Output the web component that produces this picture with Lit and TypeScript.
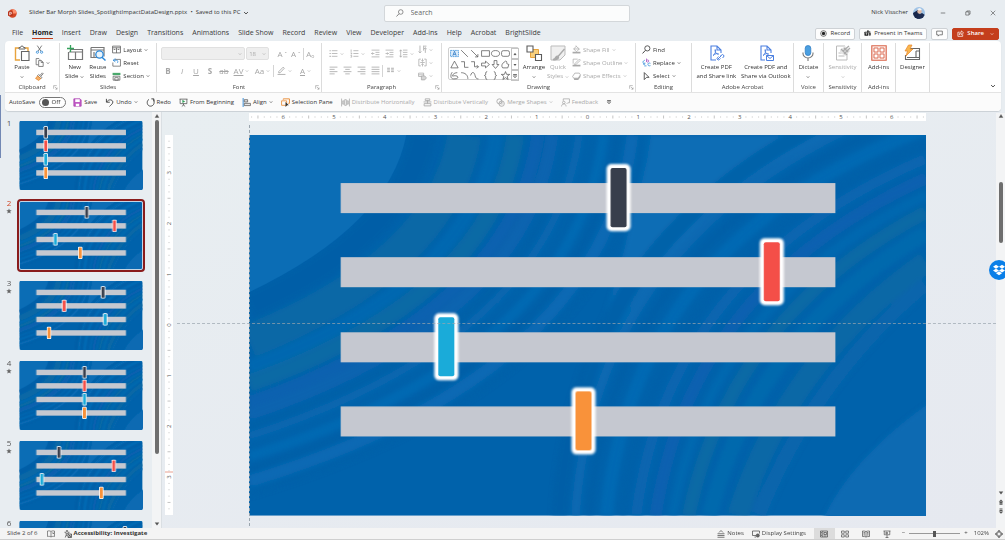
import { LitElement, html, svg, css, nothing } from "lit";
import { customElement, property } from "lit/decorators.js";
import { classMap } from "lit/directives/class-map.js";

const ICONS: Record<string, unknown> = {
  chev: svg`<path d="M3 5.5l5 5 5-5" fill="none" stroke="currentColor" stroke-width="2.400"/>`,
  cut: svg`<path d="M4 1l6.5 10M12 1L5.5 11" fill="none" stroke="#555" stroke-width="1.3"/><circle cx="4.3" cy="12.8" r="2" fill="none" stroke="#2b88d8" stroke-width="1.4"/><circle cx="11.7" cy="12.8" r="2" fill="none" stroke="#2b88d8" stroke-width="1.4"/>`,
  copy: svg`<path d="M6 12H2V1h5l2 2M6.500 4.500h5l3 3V15h-8zM11 5v3h3.500" fill="none" stroke="#5c5c5c" stroke-width="1.300"/>`,
  brush: svg`<path d="M9 6l4-4.500 1.500 1.500L10.500 7.500M6.500 4.500l6 5.500-2 2-6-5.500z" fill="#fff" stroke="#555" stroke-width="1.300"/><path d="M4.500 7L1 11.500 6.500 15l4-3.500z" fill="#f6b26b" stroke="#e07b1c" stroke-width="1.200"/>`,
  paste: svg`<path d="M5 3H1.500v12H6M11 3h3v3" fill="none" stroke="#e8a33d" stroke-width="1.400"/><path d="M5 4V2.500h1.500a1.500 1.500 0 013 0H11V4z" fill="#fff" stroke="#666" stroke-width="1"/><path d="M7.500 6.500h7.500v9H7.500z" fill="#fff" stroke="#666" stroke-width="1.100"/>`,
  newSlide: svg`<path d="M3 4.500h12.500v10H1.500V7" fill="#fff" stroke="#777" stroke-width="1.200"/><path d="M2 7h13M8.500 7v7" stroke="#777" stroke-width="1.200"/><path d="M3.500 0v7M0 3.500h7" stroke="#35a15c" stroke-width="1.300"/>`,
  reuse: svg`<path d="M1 2.500h13v9M1 2.500v10h6M1 5h13M4 7v5" fill="none" stroke="#777" stroke-width="1.200"/><circle cx="9.500" cy="9.500" r="3.700" fill="#e9f4fc" stroke="#2b88d8" stroke-width="1.300"/><path d="M12 12.200l3.500 3.300" stroke="#2b88d8" stroke-width="1.500"/>`,
  layout: svg`<path d="M1 2h14v12H1zM1 5h14M8 5v9M3 8h3M10 8h3" fill="none" stroke="#5c5c5c" stroke-width="1.400"/>`,
  reset: svg`<path d="M5 2.500h10v12H1.500V8" fill="none" stroke="#5c5c5c" stroke-width="1.300"/><path d="M6 1L2 4l4 3M2 4h6c3 0 3 4 1 5" fill="none" stroke="#2b88d8" stroke-width="1.400"/>`,
  section: svg`<path d="M1 1.500h14v4H1z" fill="#4aa96c"/><path d="M2 7.500h12v7H2zM5 10h6v4.500H5z" fill="none" stroke="#5c5c5c" stroke-width="1.300"/>`,
  pen: svg`<path d="M3 10l8-8 2 2-7.500 8H3zM1 15h14" fill="none" stroke="currentColor" stroke-width="1.500"/>`,
  bullets: svg`<path d="M5 3h10M5 8h10M5 13h10" stroke="currentColor" stroke-width="1.300"/><path d="M1 3h2M1 8h2M1 13h2" stroke="currentColor" stroke-width="2"/>`,
  numbers: svg`<path d="M6 3h9M6 8h9M6 13h9M2 1v4M1 7h2v2H1.500M1 11.500h2v3H1" fill="none" stroke="currentColor" stroke-width="1.300"/>`,
  outdent: svg`<path d="M1 2h14M8 6h7M8 10h7M1 14h14M6 8H1M3 6L1 8l2 2" fill="none" stroke="currentColor" stroke-width="1.300"/>`,
  indent: svg`<path d="M1 2h14M8 6h7M8 10h7M1 14h14M1 8h5M4 6l2 2-2 2" fill="none" stroke="currentColor" stroke-width="1.300"/>`,
  spacing: svg`<path d="M7 2h8M7 6h8M7 10h8M7 14h8M3 1.500v13M1 4l2-2.500L5 4M1 12l2 2.500L5 12" fill="none" stroke="currentColor" stroke-width="1.300"/>`,
  left: svg`<path d="M1 2h14M1 6h9M1 10h14M1 14h9" stroke="currentColor" stroke-width="1.400"/>`,
  center: svg`<path d="M1 2h14M4 6h8M1 10h14M4 14h8" stroke="currentColor" stroke-width="1.400"/>`,
  right: svg`<path d="M1 2h14M6 6h9M1 10h14M6 14h9" stroke="currentColor" stroke-width="1.400"/>`,
  justify: svg`<path d="M1 2h14M1 6h14M1 10h14M1 14h14" stroke="currentColor" stroke-width="1.400"/>`,
  columns: svg`<path d="M2 4h5M2 7h5M2 10h5M9 4h5M9 7h5M9 10h5" stroke="currentColor" stroke-width="1.600"/>`,
  textDir: svg`<path d="M3.500 1v13M1 11.500L3.500 14 6 11.500M10 1v9M13 14V5M11 2h4M10.500 7l2.500-2 2.500 2" fill="none" stroke="currentColor" stroke-width="1.400"/>`,
  alignText: svg`<path d="M5 2H1.500v12H5M11 2h3.500v12H11M8 1v5M6 4l2 2 2-2M8 15v-5M6 12l2-2 2 2M4 8h8" fill="none" stroke="currentColor" stroke-width="1.300"/>`,
  smart: svg`<path d="M1 2h9v6H1zM1 5h9" fill="none" stroke="currentColor" stroke-width="1.300"/><path d="M6 7h6l3 3.500-3 3.500H6z" fill="#d5d5d5" stroke="currentColor" stroke-width="1.300"/>`,
  arrange: svg`<path d="M4.500 4.500h8v8h-8z" fill="#f8cf7c" stroke="#e8a33d"/><path d="M1 1h6v6H1zM9.500 9.500h6v6h-6z" fill="#fff" stroke="#5c5c5c" stroke-width="1.100"/>`,
  quick: svg`<path d="M1 1h14v9l-5 5H1z" fill="#f0f0f0" stroke="#bbb"/><path d="M14.500 4L8 11.500M6 12c2-2 3 0 2 1.500-1 1-3 1.500-5 1 2 0 2-1.500 3-2.500z" fill="#aaa" stroke="#aaa" stroke-width="1.400"/>`,
  fill: svg`<path d="M7 2l6 5-5 5-5-5 4-4V1M3 7h10" fill="none" stroke="currentColor" stroke-width="1.300"/><path d="M1 13.500h14" stroke="currentColor" stroke-width="3"/>`,
  outline: svg`<path d="M10 2H2v8M5 10l8-8 2 2-7.500 7L4.500 11.500z" fill="none" stroke="currentColor" stroke-width="1.300"/><path d="M1 13.500h14" stroke="currentColor" stroke-width="3"/>`,
  effects: svg`<path d="M5 2h8l2 3-4 6H3L1 8z" fill="none" stroke="currentColor" stroke-width="1.400"/><path d="M3 11h8l4-6v4l-4 5H4z" fill="currentColor"/>`,
  find: svg`<circle cx="9.500" cy="6" r="4.600" fill="none" stroke="currentColor" stroke-width="1.400"/><path d="M6 9.500L1 15" stroke="currentColor" stroke-width="1.600"/>`,
  replace: svg`<path d="M8 1v6M8 4.500c1-1.500 4-1.500 4 .8S9 8 8 6.300" fill="none" stroke="#a64fc0" stroke-width="1.400"/><path d="M15 9.500c-3-1.500-4.500 0-4.500 2s2 3 4.500 2M5 4C1 5 1 9 4 11M2 11h3V8M4 14h4" fill="none" stroke="#2b88d8" stroke-width="1.400"/>`,
  select: svg`<path d="M4 1l8.500 8.500H8L4 13.500z" fill="none" stroke="currentColor" stroke-width="1.400"/>`,
  pdfLink: svg`<path d="M8 15H3V1h6l4 4v3M9 1v4h4" fill="none" stroke="#4a7fe0" stroke-width="1.100"/><path d="M5 10.500c2-1 3-4 2.500-5.500s-1 1 .5 3 3 1.500 2.500.8S7 8.500 5 10.500z" fill="none" stroke="#4a7fe0" stroke-width=".9"/><path d="M9.500 14.500l4-4m-3 1l-1 1a1.400 1.400 0 002 2l1-1m0-2.500l1-1a1.400 1.400 0 012 2l-1 1" fill="none" stroke="#4a7fe0"/>`,
  pdfMail: svg`<path d="M7 15H3V1h6l4 4v3M9 1v4h4" fill="none" stroke="#4a7fe0" stroke-width="1.100"/><path d="M5 10.500c2-1 3-4 2.500-5.500s-1 1 .5 3 3 1.500 2.500.8S7 8.500 5 10.500z" fill="none" stroke="#4a7fe0" stroke-width=".9"/><path d="M8.500 10.500h7v5h-7zl3.500 3 3.500-3" fill="#fff" stroke="#4a7fe0"/>`,
  mic: svg`<rect x="5.200" y=".5" width="5.600" height="10" rx="2.800" fill="#4a9fe0" stroke="#2b78c0" stroke-width=".7"/><path d="M3 7.500v1a5 4.500 0 0010 0v-1M8 13v3" fill="none" stroke="#777" stroke-width="1.100"/>`,
  sensitivity: svg`<path d="M10 1H1.500v14H12V8M3.500 8h3M3.500 11h6" fill="none" stroke="#bbb"/><path d="M5 5l5-4 5 5-4 5-6-3z" fill="#e4e4e4"/><path d="M8 6l6-5M6 4l6 6M9 3l4 4M9 9l6-6" stroke="#aaa" stroke-width="1.300"/>`,
  addins: svg`<path d="M.8.8h14.400v14.400H.8z" fill="#fbeae5" stroke="#d9644a" stroke-width="1.100"/><path d="M3 3h4v4H3zM9 3h4v4H9zM3 9h4v4H3zM9 9h4v4H9z" fill="#fff" stroke="#d9644a" stroke-width=".9"/>`,
  designer: svg`<path d="M6 3.500h9.500v11H1.500V10M3 12.500h12.500M12 6h3.500M12 6v6.500" fill="none" stroke="#666" stroke-width="1.100"/><path d="M4.500 0H8L6 4h3L2 11l1.500-5H1z" fill="#f9b64e" stroke="#e8872d" stroke-width=".7"/>`,
  save: svg`<path d="M1.500 1.500h11l2 2v11h-13z" fill="#c05bc4" stroke="#a83bae" stroke-width="1.300"/><path d="M4 2h8v5H4zM5 10h6v4.500H5z" fill="#fff"/>`,
  undo: svg`<path d="M2.500 1.500v6h6M3 7c3-5 10-5 11 0 0 3-3 5-6 8" fill="none" stroke="currentColor" stroke-width="1.500"/>`,
  redo: svg`<path d="M9.500 1.500h4.500v4.500M5 2.500C0 6 2 14.500 8 14.500c6.500 0 8-8 5-12" fill="none" stroke="currentColor" stroke-width="1.500"/>`,
  begin: svg`<path d="M1 2h14M2 2v8h12V2M8 10v3M5 15l3-2.500 3 2.500" fill="none" stroke="#555" stroke-width="1.400"/><path d="M6 3l5 3.300L6 9z" fill="#35a15c"/>`,
  align: svg`<path d="M2 0v16" stroke="#2b88d8" stroke-width="1.600"/><path d="M4 3h6v4H4zM4 9.500h11v4H4z" fill="#e4e4e4" stroke="#555" stroke-width="1.300"/>`,
  pane: svg`<path d="M4 3V1.500h11v8h-2" fill="none" stroke="#e8872d" stroke-width="1.600"/><path d="M1 5h9v8H1z" fill="none" stroke="#e8872d" stroke-width="1.400"/><path d="M8 7l6 6h-3l-3 3z" fill="#333"/>`,
  distH: svg`<path d="M1 1v14M15 1v14M3 5h2v6H3zM6.500 3h3v10h-3zM11 5h2v6h-2z" fill="none" stroke="currentColor" stroke-width="1.400"/>`,
  distV: svg`<path d="M1 7h14M4 1.500h8v3H4zM2 10h12v4H2zM8 4v6" fill="none" stroke="currentColor" stroke-width="1.500"/>`,
  merge: svg`<circle cx="6" cy="6" r="4.500" fill="none" stroke="currentColor" stroke-width="1.500"/><circle cx="10" cy="10" r="4.800" fill="none" stroke="currentColor" stroke-width="1.500"/><path d="M6 9l4-4M8 11l4-4M9 13l4-4" stroke="currentColor"/>`,
  feedback: svg`<path d="M4 5V1.500h11v7h-3l-2 2M1 15c0-6 8-6 8 0" fill="none" stroke="currentColor" stroke-width="1.400"/><circle cx="5" cy="8" r="2.300" fill="none" stroke="currentColor" stroke-width="1.400"/>`,
  more: svg`<path d="M3 4h10" stroke="currentColor" stroke-width="1.800"/><path d="M3.500 7.500h9L8 13z" fill="none" stroke="currentColor" stroke-width="1.500"/>`,
  launch: svg`<path d="M2 12V2h10M6 6l7 7M13 8v5.500H7.500" fill="none" stroke="currentColor" stroke-width="1.500"/>`,
  record: svg`<circle cx="8" cy="8" r="6.500" fill="none" stroke="#333" stroke-width="1.500"/><circle cx="8" cy="8" r="3.800" fill="#222"/>`,
  teams: svg`<rect x="1" y="4" width="9" height="9" rx="1" fill="#222"/><circle cx="9" cy="3" r="2.300" fill="#333"/><circle cx="13" cy="4.500" r="1.700" fill="#333"/><path d="M11 6.500h4.500V11c0 2-2 3-3.500 2z" fill="#444"/><path d="M3 6.500h5M5.500 6.500V11" stroke="#fff" stroke-width="1.400"/>`,
  comment: svg`<path d="M1.500 2.500h13v8.500H8l-3 3v-3H1.500z" fill="none" stroke="#444" stroke-width="1.500"/>`,
  share: svg`<path d="M6 5H2v9.500h11V10" fill="none" stroke="#fff" stroke-width="1.600"/><path d="M5 11c0-4 2-6 5-6V2l5 4.500-5 4.500V8c-2 0-4 1-5 3z" fill="none" stroke="#fff" stroke-width="1.500"/>`,
  min: svg`<path d="M2 8h12" stroke="#333" stroke-width="1.500"/>`,
  restore: svg`<path d="M2 5h8.500v8.500H2zM5 5V2.500h8.500V11h-3" fill="none" stroke="#333" stroke-width="1.400"/>`,
  close: svg`<path d="M2 2l12 12M14 2L2 14" stroke="#333" stroke-width="1.400"/>`,
  up: svg`<path d="M3 12h10L8 4z" fill="#555" stroke="#555"/>`,
  down: svg`<path d="M2 4h12l-6 8z" fill="#555"/>`,
  prev: svg`<path d="M2 7l6-6 6 6zM4 8h8v3H4zM4 12h8v3H4z" fill="#555"/>`,
  next: svg`<path d="M2 9l6 6 6-6zM4 5h8v3H4zM4 1h8v3H4z" fill="#555"/>`,
  book: svg`<path d="M8 3C6 1.500 3 1.500 1 2v11c2-.5 5-.5 7 1 2-1.500 5-1.500 7-1V2c-2-.5-5-.5-7 1zM8 3v11M11 5l3 3M14 5l-3 3" fill="none" stroke="#555" stroke-width="1.300"/>`,
  access: svg`<circle cx="6" cy="2.500" r="1.700" fill="none" stroke="#333" stroke-width="1.300"/><path d="M1 4.500l3.500 1.500v4L2.500 15M11 4.500L7.500 6v2M5 10l1.500 2M9 9l5 5M14 9l-5 5M8 8h7v7H8z" fill="none" stroke="#333" stroke-width="1.400"/>`,
  notes: svg`<path d="M4 5l4-4 4 4M1 7.500h14M1 11h14M1 14.500h14" fill="none" stroke="#444" stroke-width="1.400"/>`,
  display: svg`<path d="M8 11H1V2h14v5M5 14h3" fill="none" stroke="#444" stroke-width="1.400"/><circle cx="11.500" cy="11" r="3.300" fill="#666" stroke="#444"/>`,
  normal: svg`<path d="M1 2h14v12H1zM5.500 2v12M8 5h5v4H8zM2 5h2M2 8h2M2 11h2M8 12h5" fill="none" stroke="#444" stroke-width="1.300"/>`,
  sorter: svg`<path d="M1 2h5.500v4.500H1zM9.500 2H15v4.500H9.500zM1 9.500h5.500V14H1zM9.500 9.500H15V14H9.500z" fill="none" stroke="#444" stroke-width="1.300"/>`,
  reading: svg`<path d="M8 3C6 2 3 2 1 2v11c3 0 5 0 7 1 2-1 4-1 7-1V2c-2 0-5 0-7 1zM8 3v11M3 5h3M3 7.500h3M3 10h3M10 5h3M10 7.500h3M10 10h3" fill="none" stroke="#444" stroke-width="1.300"/>`,
  show: svg`<path d="M1 2h14M2.500 2v7.500h11V2M8 9.500V15M5 15h6M6 4l4 2-4 2z" fill="none" stroke="#444" stroke-width="1.300"/>`,
  fit: svg`<path d="M4.500 4.500h7v7h-7zM8 0L5.500 3h5zM8 16l-2.500-3h5zM0 8l3-2.500v5zM16 8l-3-2.500v5z" fill="none" stroke="#444" stroke-width="1.200"/>`,
  logo: svg`<path d="M8 .5A7.500 7.500 0 018 15.500 7.500 7.500 0 018 .5z" fill="#d24726"/><path d="M8 .5A7.500 7.500 0 0115.500 8H8z" fill="#ff8f6b"/><rect x="0" y="4" width="8.500" height="8.500" rx="1.200" fill="#b7321a"/><path d="M3 11V6h2a1.400 1.400 0 010 3H3" fill="none" stroke="#fff" stroke-width="1.200"/>`,
  dropbox: svg`<path d="M4 1l4 2.600L4 6.200 0 3.600zM12 1l4 2.600-4 2.600-4-2.600zM4 6.200l4 2.600-4 2.600L0 8.800zM12 6.200l4 2.600-4 2.600-4-2.600zM8 9.800l4 2.500L8 15l-4-2.700z" fill="#fff"/>`,
  star: svg`<path d="M8 1l2 4.800 5.200.4-4 3.400 1.300 5.100L8 12l-4.500 2.700 1.300-5.100-4-3.400L6 5.800z" fill="#666"/>`,
  sTextbox: svg`<path d="M1 2.500h14v11H1z" fill="#dcecfa" stroke="#2b88d8" stroke-width="1.300" stroke-dasharray="3 1"/><path d="M5 12l3-8 3 8M6 9.500h4" fill="none" stroke="#1e6fc0" stroke-width="1.300"/>`,
  sLine: svg`<path d="M2 2l12 12" stroke="#555" stroke-width="1.300"/>`,
  sArrow: svg`<path d="M2 2l12 12M14 9v5H9" fill="none" stroke="#555" stroke-width="1.300"/>`,
  sRect: svg`<path d="M1 3h14v10H1z" fill="none" stroke="#555" stroke-width="1.300"/>`,
  sOval: svg`<ellipse cx="8" cy="8" rx="7.200" ry="5.200" fill="none" stroke="#555" stroke-width="1.300"/>`,
  sRound: svg`<rect x="1" y="3" width="14" height="10" rx="3" fill="none" stroke="#555" stroke-width="1.300"/>`,
  sTri: svg`<path d="M8 2l6.500 12h-13z" fill="none" stroke="#555" stroke-width="1.300"/>`,
  sElbow: svg`<path d="M2 3h6v10h7" fill="none" stroke="#555" stroke-width="1.300"/>`,
  sElbowA: svg`<path d="M2 3h6v9h7M12 9l3 3-3 3" fill="none" stroke="#555" stroke-width="1.300"/>`,
  sRight: svg`<path d="M1 5.500h7V2l7 6-7 6v-3.500H1z" fill="none" stroke="#555" stroke-width="1.300"/>`,
  sDown: svg`<path d="M5.500 1v7H2l6 7 6-7h-3.500V1z" fill="none" stroke="#555" stroke-width="1.300"/>`,
  sFree: svg`<path d="M3 6l5-4c4 0 1 4 3 5l3 1-2 6H3c-2-2-2-5 0-8z" fill="none" stroke="#555" stroke-width="1.300"/>`,
  sScrib: svg`<path d="M4 2c-4 5-3 12 2 12 4 0 8 0 8-3S7 8 5 9s0-6 8-6" fill="none" stroke="#555" stroke-width="1.300"/>`,
  sArc: svg`<path d="M2 3c7 0 12 4 12 11" fill="none" stroke="#555" stroke-width="1.300"/>`,
  sCurve: svg`<path d="M1 8c3-9 7-5 8 0s3 6 6 6" fill="none" stroke="#555" stroke-width="1.300"/>`,
  sLBrace: svg`<path d="M11 1C7 1 9 6 8 7L6 8l2 1c1 1-1 6 3 6" fill="none" stroke="#555" stroke-width="1.300"/>`,
  sRBrace: svg`<path d="M5 1c4 0 2 5 3 6l2 1-2 1c-1 1 1 6-3 6" fill="none" stroke="#555" stroke-width="1.300"/>`,
  sStar: svg`<path d="M8 1l2 5h5.500l-4.400 3.500 1.500 5.500L8 11.800 3.400 15l1.500-5.500L.5 6H6z" fill="none" stroke="#555" stroke-width="1.300"/>`,
};

const icon = (name: string, size = "s") =>
  html`<svg class="ic ${size}" viewBox="0 0 16 16" aria-hidden="true">${ICONS[name]}</svg>`;
const chev = () => icon("chev", "xs");

const iconCss = css`
  .ic { display: block; flex: none; overflow: visible; }
  .xs { width: 4px; height: 4px; }
  .t { width: 6px; height: 6px; }
  .s { width: 9px; height: 9px; }
  .l { width: 16px; height: 16px; }
  * { box-sizing: border-box; }
  button { font: inherit; color: inherit; background: none; border: 0; padding: 0; margin: 0; display: flex; align-items: center; white-space: nowrap; }
`;

/* ---------- slide artwork ---------- */

interface Slide { handles: number[]; animated: boolean; }

const SLIDES: Slide[] = [
  { handles: [144, 144, 144, 144], animated: false },
  { handles: [369, 522, 197, 334], animated: true },
  { handles: [459, 245, 471, 162], animated: true },
  { handles: [357, 357, 357, 357], animated: true },
  { handles: [216, 518, 122, 450], animated: true },
  { handles: [580, 300, 300, 300], animated: false },
];
const COLORS = ["#383e4c", "#f44f48", "#1aabd9", "#f9923a"];
const BAR_Y = [48, 122, 197, 271];

/* Ribbons sweeping round the top left corner: position 0..1, thickness, colour, opacity. */
const UPPER: [number, number, string, number][] = [
  [0.07, 26, "#005fa6", 0.8], [0.24, 34, "#126da2", 0.5], [0.37, 14, "#0069b2", 0.8],
  [0.45, 18, "#1070a0", 0.5], [0.54, 12, "#1361b2", 0.65], [0.6, 12, "#0b64b0", 0.8],
  [0.66, 8, "#005fa7", 0.7], [0.71, 9, "#0c69b3", 0.6], [0.76, 5, "#0762aa", 0.8],
  [0.81, 10, "#006ab4", 0.8], [0.87, 6, "#005ea5", 0.7], [0.93, 12, "#0b6bb5", 0.8],
  [0.99, 7, "#0060a8", 0.6],
];
/* Ribbons sweeping round the bottom right corner. */
const LOWER: [number, number, string, number][] = [
  [0.02, 16, "#005fa6", 0.8], [0.09, 9, "#0a6ab3", 0.9], [0.15, 7, "#005ea5", 0.7],
  [0.22, 13, "#006ab4", 0.9], [0.29, 7, "#0060a8", 0.7], [0.35, 12, "#0966b0", 0.8],
  [0.43, 12, "#1361b2", 0.7], [0.5, 10, "#0069b0", 0.8], [0.57, 14, "#1070a0", 0.5],
  [0.66, 16, "#006aae", 0.8], [0.78, 22, "#126da2", 0.5], [0.87, 16, "#0b67ae", 0.6],
];
const mix = (a: number, b: number, t: number) => Math.round(a + (b - a) * t);
const upperPath = (t: number) =>
  `M${mix(157, 400, t)} 0Q${mix(140, 370, t)} ${mix(90, 250, t)} 0 ${mix(157, 360, t)}`;
const lowerPath = (t: number) =>
  `M676 ${mix(-60, 180, t)}Q${mix(320, 600, t)} ${mix(60, 270, t)} ${mix(305, 540, t)} 380`;

const slideArt = (slide: Slide, label: string) => html`
  <svg class="slide-art" viewBox="0 0 676 380" role="img" aria-label=${label}>
    <defs>
      <filter id="soft" x="-10%" y="-10%" width="120%" height="120%"><feGaussianBlur stdDeviation="2"></feGaussianBlur></filter>
      <filter id="glow" x="-50%" y="-20%" width="200%" height="140%"><feGaussianBlur stdDeviation="1.2"></feGaussianBlur></filter>
      <linearGradient id="wedge" x1="0" y1="0" x2="0" y2="1">
        <stop offset="0" stop-color="#0b6db5"></stop><stop offset=".5" stop-color="#0b6db5"></stop><stop offset="1" stop-color="#0063ac"></stop>
      </linearGradient>
    </defs>
    <rect width="676" height="380" fill="#0062ab"></rect>
    <g filter="url(#soft)" fill="none">
      <path d="M395 0H580Q420 70 350 250H330Q385 110 395 0z" fill="url(#wedge)"></path>
      ${UPPER.map(([t, w, c, o]) => svg`<path d=${upperPath(t)} stroke=${c} stroke-width=${w} opacity=${o}></path>`)}
      ${LOWER.map(([t, w, c, o]) => svg`<path d=${lowerPath(t)} stroke=${c} stroke-width=${w} opacity=${o}></path>`)}
      <path d="M690 260Q600 320 570 390H690z" fill="#096ab2"></path>
    </g>
    <path d="M0 0H157Q140 90 0 157z" fill="#0b6db5"></path>
    ${BAR_Y.map((y) => svg`<rect x="91.500" y=${y} width="494" height="30" fill="#c5c8d0"></rect>`)}
    ${slide.handles.map((x, i) => svg`
      <rect x=${x - 12} y=${BAR_Y[i] - 19} width="24" height="67" rx="5" fill="#fff" filter="url(#glow)"></rect>
      <rect x=${x - 10} y=${BAR_Y[i] - 17} width="20" height="63" rx="3" fill="#fff"></rect>
      <rect x=${x - 8} y=${BAR_Y[i] - 15} width="16" height="59" rx="2" fill=${COLORS[i]}></rect>`)}
  </svg>`;

/* ---------- title bar and tabs ---------- */

@customElement("title-bar")
class TitleBar extends LitElement {
  static styles = [iconCss, css`
    :host { display: block; }
    .title { display: grid; grid-template-columns: 1fr 246px 1fr; align-items: center; height: 26px; padding: 0 0 0 8px; }
    .doc { display: flex; align-items: center; gap: 12px; font-size: 6px; }
    .doc button { gap: 3px; }
    .search { display: flex; align-items: center; gap: 7px; height: 17px; padding: 0 11px; background: #fbfcfc; border: 1px solid #d3d7da; border-radius: 2px; }
    .search input { flex: 1; min-width: 0; border: 0; outline: 0; padding: 0; background: none; font: inherit; color: #333; }
    .search input::placeholder { color: #666; opacity: 1; }
    .search .s { width: 8px; height: 8px; color: #666; }
    .who { display: flex; align-items: center; justify-content: flex-end; gap: 5px; font-size: 6px; }
    .avatar { width: 12px; height: 12px; border-radius: 50%; overflow: hidden; }
    .avatar svg { display: block; width: 12px; height: 12px; }
    .win { display: flex; }
    .win button { width: 25px; height: 20px; justify-content: center; }
    .tabs { display: flex; align-items: center; height: 15px; padding: 0 6px 0 12px; }
    nav { display: flex; gap: 9px; flex: 1; }
    nav a { color: #3b3b3b; text-decoration: none; line-height: 10px; border-bottom: 1px solid transparent; }
    nav a.on { font-weight: 700; border-color: #c43e1c; color: #222; }
    .acts { display: flex; gap: 4px; font-size: 6px; }
    .acts button { height: 12px; padding: 0 4px; gap: 3px; background: #fdfdfd; border: 1px solid #cdd1d5; border-radius: 2px; }
    .acts .s { width: 7px; height: 7px; }
    .acts .share { background: #c43e1c; border-color: #c43e1c; color: #fff; font-weight: 600; }
    .share .xs { margin-left: 3px; }
  `];
  render() {
    const tabs = ["File", "Home", "Insert", "Draw", "Design", "Transitions", "Animations", "Slide Show", "Record", "Review", "View", "Developer", "Add-ins", "Help", "Acrobat", "BrightSlide"];
    return html`
      <header class="title">
        <div class="doc">${icon("logo")}<button>Slider Bar Morph Slides_SpotlightImpactDataDesign.pptx &nbsp;•&nbsp; Saved to this PC ${icon("chev", "t")}</button></div>
        <label class="search">${icon("find")}<input type="text" placeholder="Search" aria-label="Search"></label>
        <div class="who">Nick Visscher
          <span class="avatar"><svg viewBox="0 0 12 12" aria-hidden="true"><path d="M0 0h12v12H0z" fill="#9fc3e6"/><path d="M0 6l5-3 2 5-2 4H0z" fill="#17264a"/><circle cx="6.500" cy="4.500" r="2.200" fill="#e0b9a4"/><path d="M5 8l4-2 3 2v4H4z" fill="#1d2c50"/><path d="M4 2l3-1 2 2-3 .5z" fill="#f4f4f4"/></svg></span>
          <span class="win"><button aria-label="Minimize">${icon("min", "t")}</button><button aria-label="Restore">${icon("restore", "t")}</button><button aria-label="Close">${icon("close", "t")}</button></span>
        </div>
      </header>
      <div class="tabs">
        <nav>${tabs.map((t) => html`<a href="#" class=${classMap({ on: t === "Home" })}>${t}</a>`)}</nav>
        <div class="acts">
          <button>${icon("record")}Record</button><button>${icon("teams")}Present in Teams</button>
          <button aria-label="Comments">${icon("comment")}</button><button class="share">${icon("share")}Share ${chev()}</button>
        </div>
      </div>`;
  }
}

/* ---------- ribbon ---------- */

@customElement("app-ribbon")
class AppRibbon extends LitElement {
  static styles = [iconCss, css`
    :host { display: block; margin: 0 4px 0 5px; background: #fff; border-radius: 4px; box-shadow: 0 1px 1px #c9cfd4; font-size: 6px; line-height: 8px; }
    .ribbon { display: flex; height: 51px; border-radius: 4px 4px 0 0; }
    .group { position: relative; flex: none; display: flex; flex-direction: column; border-right: 1px solid #dcdcdc; margin-top: 2px; color: #333; }
    .body { flex: 1; display: flex; min-height: 0; }
    .name { display: flex; justify-content: center; flex: none; line-height: 8px; color: #444; height: 9px; }
    .dlg { position: absolute; right: 1px; bottom: 2px; color: #777; }
    .dlg .t { width: 5px; height: 5px; }
    .w-clip { width: 55px; } .w-slides { width: 97px; } .w-font { width: 165px; } .w-para { width: 120px; }
    .w-draw { width: 194px; } .w-edit { width: 56px; } .w-pdf { width: 102px; } .w-voice { width: 30px; }
    .w-sens { width: 38px; } .w-add { width: 34px; } .w-des { width: 34px; }
    .big { flex-direction: column; text-align: center; line-height: 9px; }
    .big .l { margin: 2px 0; }
    .big .cap { display: flex; align-items: center; gap: 2px; }
    .big .drop { height: 9px; display: flex; align-items: center; }
    .stack { display: flex; flex-direction: column; justify-content: space-around; height: 40px; }
    .stack button { gap: 2px; height: 12px; }
    .off, .off button { color: #a9a9a9; }
    .w-clip .body { padding-left: 9px; gap: 5px; }
    .w-slides .body { padding-left: 5px; gap: 5px; }
    .w-slides .stack { margin-left: 1px; }
    .w-font .body, .w-para .body { color: #a6a6a6; }
    .w-font .body { flex-direction: column; padding: 2px 4px 0; }
    .row { display: flex; align-items: center; height: 17px; }
    .combo { display: flex; align-items: center; height: 13px; background: #eee; border: 1px solid #e0e0e0; border-radius: 2px; padding-right: 2px; }
    .combo select { appearance: none; flex: 1; min-width: 0; border: 0; background: none; font: inherit; color: #aaa; padding: 0 2px; opacity: 1; }
    .face { width: 87px; } .pt { width: 24px; margin: 0 6px 0 1px; }
    .glyph { font-size: 8px; }
    .glyph sup { font-size: 6px; line-height: 4px; }
    .row button { width: 14px; justify-content: center; gap: 2px; }
    .row .wide { width: 21px; }
    .vr { width: 1px; height: 12px; background: #d4d4d4; }
    .w-para .body { padding-left: 4px; }
    .w-para .cols { width: 92px; padding-top: 2px; }
    .w-draw .body { padding: 0 6px; }
    .gallery { display: grid; grid-template-columns: repeat(6, 1fr) 7px; width: 71px; height: 33px; margin-top: 4px; border: 1px solid #cfcfcf; border-radius: 2px; }
    .gallery button { justify-content: center; height: 10px; }
    .gallery .scroll { border: 1px solid #c4c4c4; height: 11px; margin-right: -1px; }
    .w-draw .big { width: 26px; margin-left: 2px; }
    .w-draw .big + .big { margin-left: -2px; }
    .w-draw .stack { margin-left: 1px; }
    .w-edit .body { padding-left: 6px; }
    .w-pdf .body { justify-content: space-around; padding-left: 2px; }
    .one .body { justify-content: center; }
    .fold { margin-left: auto; align-self: flex-end; padding: 0 5px 3px 0; }
    .qat { display: flex; align-items: center; gap: 8px; height: 19px; padding: 0 4px; background: #fbfbfb; border-top: 1px solid #e3e3e3; border-radius: 0 0 4px 4px; color: #333; }
    .qat button, .qat label { display: flex; align-items: center; gap: 2px; }
    .qat .off { color: #a9a9a9; }
    .qat .auto { gap: 4px; margin-right: -1px; }
    .switch { display: flex; align-items: center; justify-content: flex-end; position: relative; width: 27px; height: 11px; padding-right: 5px; border: 1px solid #777; border-radius: 6px; background: #fff; }
    .switch input { position: absolute; inset: 0; margin: 0; opacity: 0; }
    .switch::before { content: ""; width: 7px; height: 7px; border-radius: 50%; background: #555; margin-right: auto; margin-left: 2px; }
  `];

  group(cls: string, name: string, body: unknown, dlg = false) {
    return html`<section class="group ${cls}"><div class="body">${body}</div><div class="name">${name}</div>
      ${dlg ? html`<button class="dlg" aria-label="${name} options">${icon("launch", "t")}</button>` : nothing}</section>`;
  }
  big(ic: string, a: string, b = "", drop = false, off = false) {
    return html`<button class=${classMap({ big: true, off })}>${icon(ic, "l")}<span>${a}</span>
      ${b ? html`<span class="cap">${b}${drop ? chev() : nothing}</span>` : drop ? html`<span class="drop">${chev()}</span>` : nothing}</button>`;
  }
  small(ic: string, label = "", drop = false) {
    return html`<button aria-label=${label || ic}>${icon(ic)}${label}${drop ? chev() : nothing}</button>`;
  }
  tool(ic: string, drop = false) {
    return html`<button class=${classMap({ wide: drop })} aria-label=${ic}>${icon(ic)}${drop ? chev() : nothing}</button>`;
  }
  glyph(g: unknown, drop = false) {
    return html`<button class=${classMap({ glyph: true, wide: drop })}>${g}${drop ? chev() : nothing}</button>`;
  }
  render() {
    const rows = [
      ["sTextbox", "sLine", "sArrow", "sRect", "sOval", "sRound"],
      ["sTri", "sElbow", "sElbowA", "sRight", "sDown", "sFree"],
      ["sScrib", "sArc", "sCurve", "sLBrace", "sRBrace", "sStar"],
    ];
    const scroll = [icon("up", "xs"), icon("down", "xs"), icon("more", "t")];
    return html`
      <div class="ribbon">
        ${this.group("w-clip", "Clipboard", html`${this.big("paste", "Paste", "", true)}
          <div class="stack">${this.small("cut")}${this.small("copy", "", true)}${this.small("brush")}</div>`, true)}
        ${this.group("w-slides", "Slides", html`${this.big("newSlide", "New", "Slide", true)}${this.big("reuse", "Reuse", "Slides")}
          <div class="stack">${this.small("layout", "Layout", true)}${this.small("reset", "Reset")}${this.small("section", "Section", true)}</div>`)}
        ${this.group("w-font", "Font", html`
          <div class="row"><span class="combo face"><select disabled aria-label="Font"><option></option></select>${chev()}</span>
            <span class="combo pt"><select disabled aria-label="Font size"><option>18</option></select>${chev()}</span>
            ${this.glyph(html`A<sup>ˆ</sup>`)}${this.glyph(html`A<sup>ˇ</sup>`)}<span class="vr"></span>${this.glyph("Aₒ")}</div>
          <div class="row">${this.glyph(html`<b>B</b>`)}${this.glyph(html`<i>I</i>`)}${this.glyph(html`<u>U</u>`)}${this.glyph(html`<b>S</b>`)}${this.glyph(html`<s>ab</s>`)}
            ${this.glyph(html`<u>AV</u>`, true)}${this.glyph("Aa", true)}<span class="vr"></span>${this.tool("pen", true)}${this.glyph(html`<u>A</u>`, true)}</div>`, true)}
        ${this.group("w-para", "Paragraph", html`
          <div class="cols"><div class="row">${this.tool("bullets", true)}${this.tool("numbers", true)}${this.tool("outdent")}${this.tool("indent")}${this.tool("spacing", true)}</div>
            <div class="row">${this.tool("left")}${this.tool("center")}${this.tool("right")}${this.tool("justify")}<span class="vr"></span>${this.tool("columns", true)}</div></div>
          <div class="stack">${this.small("textDir", "", true)}${this.small("alignText", "", true)}${this.small("smart", "", true)}</div>`, true)}
        ${this.group("w-draw", "Drawing", html`
          <div class="gallery">${rows.map((r, i) => html`${r.map((n) => html`<button aria-label=${n.slice(1)}>${icon(n)}</button>`)}<button class="scroll" aria-label="Scroll shapes">${scroll[i]}</button>`)}</div>
          ${this.big("arrange", "Arrange", "", true)}${this.big("quick", "Quick", "Styles", true, true)}
          <div class="stack off">${this.small("fill", "Shape Fill", true)}${this.small("outline", "Shape Outline", true)}${this.small("effects", "Shape Effects", true)}</div>`, true)}
        ${this.group("w-edit", "Editing", html`<div class="stack">${this.small("find", "Find")}${this.small("replace", "Replace", true)}${this.small("select", "Select", true)}</div>`)}
        ${this.group("w-pdf", "Adobe Acrobat", html`${this.big("pdfLink", "Create PDF", "and Share link")}${this.big("pdfMail", "Create PDF and", "Share via Outlook")}`)}
        ${this.group("w-voice one", "Voice", this.big("mic", "Dictate", "", true))}
        ${this.group("w-sens one", "Sensitivity", this.big("sensitivity", "Sensitivity", "", true, true))}
        ${this.group("w-add one", "Add-ins", this.big("addins", "Add-ins"))}
        ${this.group("w-des one", "", this.big("designer", "Designer"))}
        <button class="fold" aria-label="Collapse ribbon">${icon("chev", "t")}</button>
      </div>
      <div class="qat">
        <label class="auto">AutoSave<span class="switch"><input type="checkbox" role="switch">Off</span></label>
        ${this.small("save", "Save")}${this.small("undo", "Undo", true)}${this.small("redo", "Redo")}${this.small("begin", "From Beginning")}
        ${this.small("align", "Align", true)}${this.small("pane", "Selection Pane")}
        <button class="off">${icon("distH")}Distribute Horizontally</button><button class="off">${icon("distV")}Distribute Vertically</button>
        <button class="off">${icon("merge")}Merge Shapes${chev()}</button><button class="off">${icon("feedback")}Feedback</button>
        <button aria-label="Customize toolbar">${icon("more", "t")}</button>
      </div>`;
  }
}

/* ---------- thumbnails ---------- */

@customElement("slide-list")
class SlideList extends LitElement {
  @property({ type: Number }) current = 2;
  static styles = [iconCss, css`
    :host { display: flex; min-height: 0; overflow: hidden; border-right: 1px solid #dadfe3; }
    ol { flex: 1; list-style: none; margin: 0; padding: 9px 9px 0 5px; display: flex; flex-direction: column; gap: 11px; }
    li { display: grid; grid-template-columns: 8px 1fr; column-gap: 6px; flex: none; }
    .num { display: flex; flex-direction: column; align-items: center; font-size: 8px; line-height: 4px; gap: 3px; color: #555; }
    .thumb { border-radius: 2px; overflow: hidden; height: 69px; }
    .thumb .slide-art { display: block; width: 100%; height: 69px; }
    .on .num { color: #d24726; }
    .on .thumb { position: relative; outline: 2px solid #8a1c1c; overflow: visible; }
    .on .thumb::after { content: ""; position: absolute; inset: 0; border: 1px solid #c5d5e5; border-radius: 2px; }
    .bar { width: 9px; background: #f3f4f5; display: flex; flex-direction: column; align-items: center; padding: 1px 0; gap: 1px; }
    .knob { width: 4px; flex: 0 0 334px; border-radius: 2px; background: #6e6e6e; }
    .bar .t:last-child { margin-top: auto; }
  `];
  render() {
    return html`<ol>${SLIDES.map((s, i) => html`<li class=${classMap({ on: i + 1 === this.current })}>
        <div class="num"><span>${i + 1}</span>${s.animated ? icon("star", "t") : nothing}</div>
        <div class="thumb">${slideArt(s, `Slide ${i + 1}`)}</div></li>`)}</ol>
      <div class="bar">${icon("up", "t")}<span class="knob"></span>${icon("down", "t")}</div>`;
  }
}

/* ---------- editing area ---------- */

const INCH = 50.7;
const ticks = (length: number, range: number) => {
  const out: { at: number; n: number | null; half: boolean }[] = [];
  for (let i = -range * 8; i <= range * 8; i++) {
    const at = length / 2 + (i * INCH) / 8;
    if (at > 2 && at < length - 2) out.push({ at, n: i % 8 === 0 ? Math.abs(i / 8) : null, half: i % 4 === 0 });
  }
  return out;
};

@customElement("slide-editor")
class SlideEditor extends LitElement {
  static styles = [iconCss, css`
    :host { display: grid; grid-template-columns: 8px 76px 1fr 70px 9px; grid-template-rows: 8px 14px 1fr; padding-left: 3px; padding-top: 1px; min-height: 0; background: linear-gradient(160deg, #e8eef1, #e6e9f0); }
    .h { grid-area: 1 / 3; background: #fff; }
    .v { grid-area: 3 / 1; background: #fff; align-self: start; }
    .h svg, .v svg { display: block; width: 100%; }
    text { font-size: 6px; fill: #555; text-anchor: middle; }
    .frame { grid-area: 3 / 3; position: relative; align-self: start; }
    .slide-art { display: block; width: 100%; height: auto; }
    .guide-h { position: absolute; left: -72px; right: -70px; top: 49.5%; border-top: 1px dashed #9aa5ae; opacity: .7; }
    .guide-v { position: absolute; top: -10px; bottom: -10px; left: 0; border-left: 1px dashed #9aa5ae; }
    .bar { grid-area: 1 / 5 / 4 / 6; background: #f3f4f5; display: flex; flex-direction: column; align-items: center; gap: 3px; padding-bottom: 14px; }
    .knob { width: 4px; height: 61px; border-radius: 2px; background: #6e6e6e; margin: 60px 0 auto; }
  `];
  render() {
    return html`
      <div class="h"><svg viewBox="0 0 676 8" aria-hidden="true">${ticks(676, 7).map((t) =>
        t.n !== null ? svg`<text x=${t.at} y="6">${t.n}</text>` : svg`<path d=${t.half ? `M${t.at} 2.500v3` : `M${t.at} 3.500v1`} stroke="#b5b5b5" stroke-width=".8"></path>`)}</svg></div>
      <div class="v"><svg viewBox="0 0 8 380" aria-hidden="true">${ticks(380, 4).map((t) =>
        t.n !== null ? svg`<text x="0" y="2" transform=${`translate(4 ${t.at}) rotate(-90)`}>${t.n}</text>` : svg`<path d=${t.half ? `M2.500 ${t.at}h3` : `M3.500 ${t.at}h1`} stroke="#b5b5b5" stroke-width=".8"></path>`)}
        <path d="M0 337h8" stroke="#e8a090"></path></svg></div>
      <div class="frame">${slideArt(SLIDES[1], "Slide 2")}<i class="guide-h"></i><i class="guide-v"></i></div>
      <div class="bar">${icon("up", "t")}<span class="knob"></span>${icon("down", "t")}${icon("prev", "t")}${icon("next", "t")}</div>`;
  }
}

/* ---------- status bar ---------- */

@customElement("status-bar")
class StatusBar extends LitElement {
  static styles = [iconCss, css`
    :host { display: flex; align-items: center; height: 12px; padding: 0 2px 0 7px; background: #f4f4f4; border-bottom: 1px solid #cfcfcf; font-size: 6px; color: #444; position: relative; }
    .side { display: flex; align-items: center; gap: 9px; flex: 1; }
    .side.end { flex: none; gap: 8px; }
    .side button { gap: 2px; }
    .s { width: 8px; height: 8px; }
    .views { display: flex; margin: 0 4px 0 8px; }
    .views button { width: 21px; height: 11px; justify-content: center; }
    .views .on { background: #dcdcdc; }
    .zoom { display: flex; align-items: center; gap: 4px; }
    input { appearance: none; width: 51px; height: 8px; margin: 0; background: linear-gradient(#999, #999) center / 100% 1px no-repeat; }
    input::-webkit-slider-thumb { appearance: none; width: 3px; height: 6px; background: #555; }
    .pct { margin: 0 2px; }
    b { font-weight: 700; color: #333; }
  `];
  render() {
    return html`
      <div class="side"><span>Slide 2 of 6</span><button aria-label="Spelling">${icon("book")}</button><button>${icon("access")}<b>Accessibility: Investigate</b></button></div>
      <div class="side end"><button>${icon("notes")}Notes</button><button>${icon("display")}Display Settings</button></div>
      <div class="views">${["normal", "sorter", "reading", "show"].map((v) => html`<button class=${classMap({ on: v === "normal" })} aria-label=${v}>${icon(v)}</button>`)}</div>
      <div class="zoom"><button aria-label="Zoom out">−</button><input type="range" min="10" max="194" value="102" aria-label="Zoom"><button aria-label="Zoom in">+</button>
        <button class="pct">102%</button><button aria-label="Fit slide">${icon("fit")}</button></div>`;
  }
}

@customElement("app-root")
class AppRoot extends LitElement {
  static styles = [iconCss, css`
    :host { display: flex; flex-direction: column; position: relative; height: 100vh; overflow: hidden; background: #e8edf1; color: #333; font-family: "Open Sans", "Noto Sans", sans-serif; font-size: 7px; line-height: 1.3; }
    .main { flex: 1; min-height: 0; display: grid; grid-template-columns: 162px 1fr; grid-template-rows: 100%; margin-top: 1px; }
    .behind { position: absolute; left: 0; top: 95px; width: 1px; height: 63px; background: #7288b4; }
    .badge { position: absolute; right: -4px; top: 260px; width: 20px; height: 20px; border-radius: 50%; background: #0a7fe8; align-items: center; justify-content: center; }
    .badge .ic { width: 12px; height: 12px; }
  `];
  render() {
    return html`<title-bar></title-bar><app-ribbon></app-ribbon>
      <div class="main"><slide-list current="2"></slide-list><slide-editor></slide-editor></div>
      <status-bar></status-bar>
      <span class="behind"></span><button class="badge" aria-label="Dropbox">${icon("dropbox")}</button>`;
  }
}
